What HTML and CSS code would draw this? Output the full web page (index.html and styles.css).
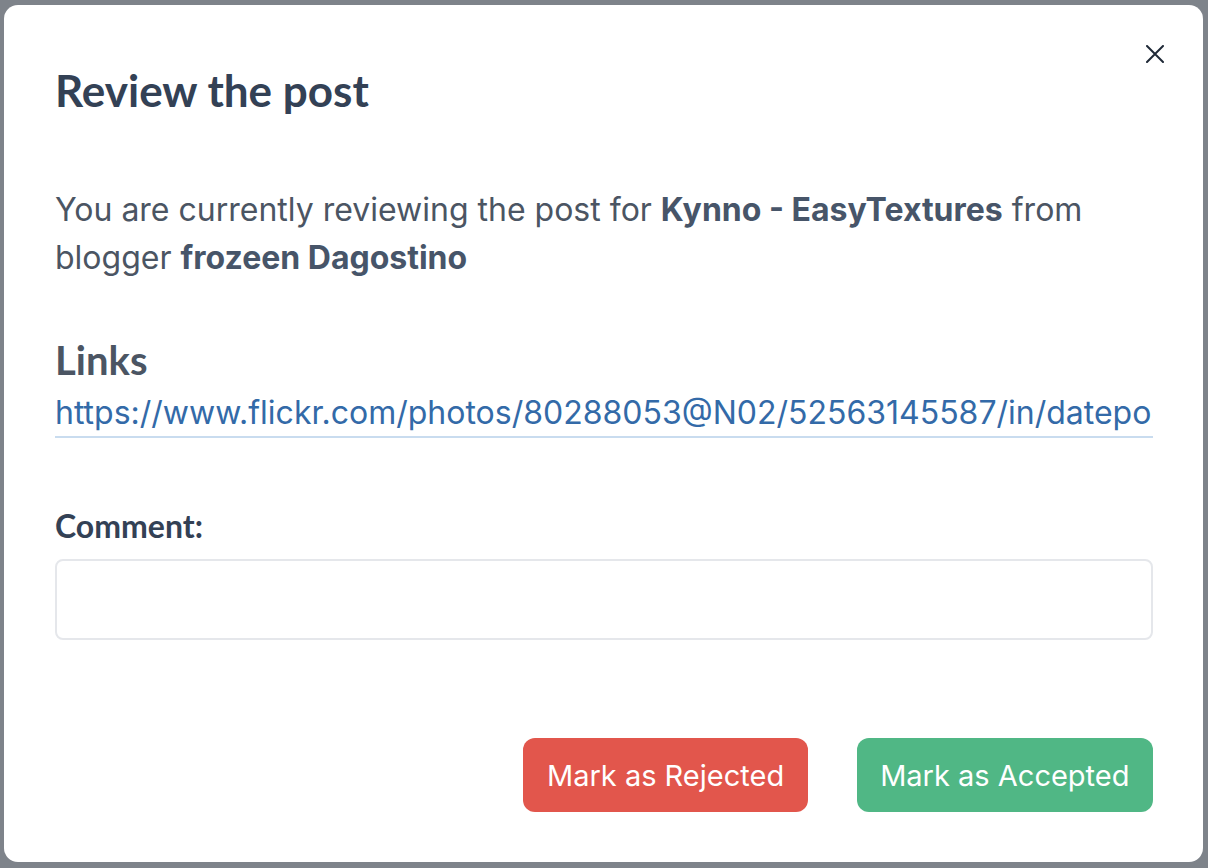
FILE: index.html
```html
<!DOCTYPE html>
<html>
<head>
<meta charset="utf-8">
<link rel="stylesheet" href="styles.css">
</head>
<body>
<div class="backdrop">
  <div class="modal">
    <button class="close" aria-label="Close">
      <svg viewBox="0 0 18 18" width="18" height="18"><path d="M1 1L17 17M17 1L1 17" stroke="#1f2937" stroke-width="2" stroke-linecap="round"/></svg>
    </button>
    <h1 class="title">Review the post</h1>
    <p class="intro">You are currently reviewing the post for <b>Kynno - EasyTextures</b> from blogger <b>frozeen Dagostino</b></p>
    <h2 class="links-title">Links</h2>
    <a class="link" href="#">https://www.flickr.com/photos/80288053@N02/52563145587/in/dateposted/</a>
    <label class="comment-label">Comment:</label>
    <input class="comment" type="text">
    <div class="actions">
      <button class="btn reject">Mark as Rejected</button>
      <button class="btn accept">Mark as Accepted</button>
    </div>
  </div>
</div>
</body>
</html>
```
FILE: styles.css
```css
html, body {
  margin: 0;
  height: 100%;
}
body {
  background: #7e838a;
  font-family: Inter, "Noto Sans", sans-serif;
}
.backdrop {
  box-sizing: border-box;
  height: 100%;
  padding: 5px 5px 6px 4px;
}
.modal {
  position: relative;
  box-sizing: border-box;
  height: 100%;
  background: #ffffff;
  border-radius: 14px;
  padding: 59px 50px 0 51px;
  display: flex;
  flex-direction: column;
}
.close {
  position: absolute;
  top: 40px;
  right: 39px;
  width: 18px;
  height: 18px;
  padding: 0;
  border: 0;
  background: none;
}
.close svg { display: block; }
.title {
  margin: 0;
  font-family: "Lato", sans-serif;
  font-weight: 700;
  font-size: 44px;
  line-height: 52px;
  color: #334155;
}
.intro {
  margin: 70px 0 0;
  font-size: 32px;
  line-height: 48px;
  color: #4b5563;
}
.intro b {
  font-weight: 700;
  color: #475569;
}
.links-title {
  margin: 54px 0 0;
  font-family: "Lato", sans-serif;
  font-weight: 700;
  font-size: 40px;
  line-height: 48px;
  color: #4b5563;
}
.link {
  display: block;
  margin-top: 6px;
  white-space: nowrap;
  overflow: hidden;
  font-size: 32px;
  line-height: 46px;
  color: #336aa8;
  text-decoration: none;
  border-bottom: 2px solid #c9dcef;
}
.comment-label {
  margin-top: 68px;
  font-family: "Lato", sans-serif;
  font-weight: 700;
  font-size: 32px;
  line-height: 40px;
  color: #334155;
}
.comment {
  margin-top: 13px;
  height: 81px;
  box-sizing: border-box;
  border: 2px solid #e5e7eb;
  border-radius: 8px;
  outline: none;
  font-size: 28px;
  padding: 0 16px;
}
.actions {
  margin-top: 98px;
  display: flex;
  justify-content: flex-end;
  gap: 49px;
}
.btn {
  height: 74px;
  padding: 0 23.5px;
  border: 0;
  border-radius: 12px;
  font-family: Inter, sans-serif;
  font-size: 29px;
  color: #ffffff;
}
.reject { background: #e2564c; }
.accept { background: #50b785; }
```
